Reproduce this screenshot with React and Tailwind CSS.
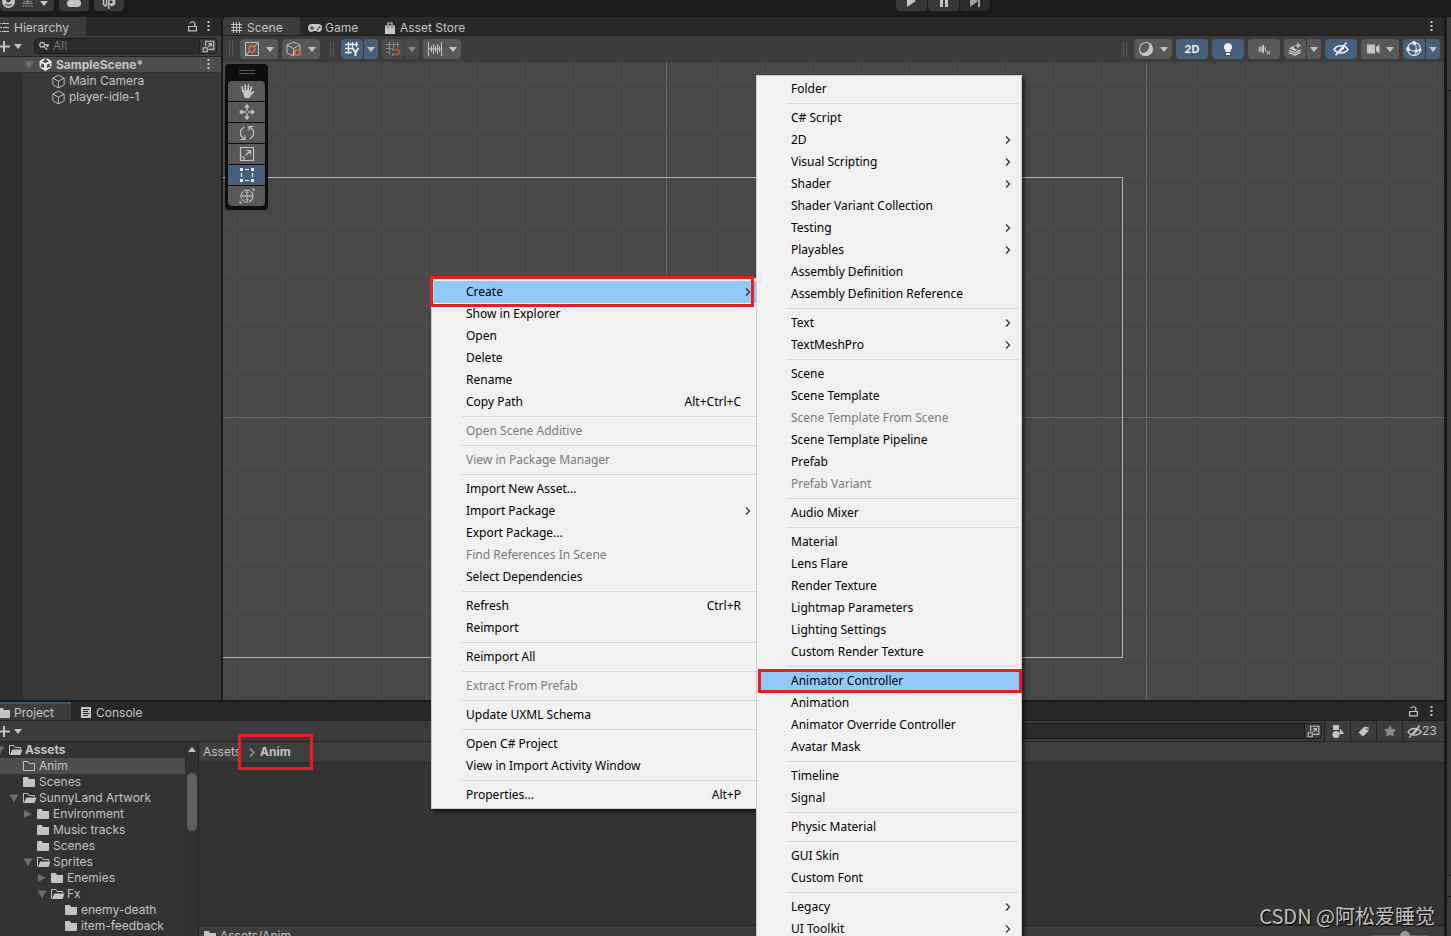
// src/App.jsx
import { FaStar } from "react-icons/fa";

const CREATE_MENU = [
  ["Folder"],
  ["C# Script", "2D>", "Visual Scripting>", "Shader>", "Shader Variant Collection", "Testing>", "Playables>", "Assembly Definition", "Assembly Definition Reference"],
  ["Text>", "TextMeshPro>"],
  ["Scene", "Scene Template", "-Scene Template From Scene", "Scene Template Pipeline", "Prefab", "-Prefab Variant"],
  ["Audio Mixer"],
  ["Material", "Lens Flare", "Render Texture", "Lightmap Parameters", "Lighting Settings", "Custom Render Texture"],
  ["*Animator Controller", "Animation", "Animator Override Controller", "Avatar Mask"],
  ["Timeline", "Signal"],
  ["Physic Material"],
  ["GUI Skin", "Custom Font"],
  ["Legacy>", "UI Toolkit>"],
];

const ASSET_MENU = [
  ["*Create>", "Show in Explorer", "Open", "Delete", "Rename", "Copy Path|Alt+Ctrl+C"],
  ["-Open Scene Additive"],
  ["-View in Package Manager"],
  ["Import New Asset...", "Import Package>", "Export Package...", "-Find References In Scene", "Select Dependencies"],
  ["Refresh|Ctrl+R", "Reimport"],
  ["Reimport All"],
  ["-Extract From Prefab"],
  ["Update UXML Schema"],
  ["Open C# Project", "View in Import Activity Window"],
  ["Properties...|Alt+P"],
];

const FOLDERS = [
  { name: "Assets", level: 0, arrow: "down", icon: "open", bold: true },
  { name: "Anim", level: 1, icon: "empty", selected: true },
  { name: "Scenes", level: 1 },
  { name: "SunnyLand Artwork", level: 1, arrow: "down", icon: "open" },
  { name: "Environment", level: 2, arrow: "right" },
  { name: "Music tracks", level: 2 },
  { name: "Scenes", level: 2 },
  { name: "Sprites", level: 2, arrow: "down", icon: "open" },
  { name: "Enemies", level: 3, arrow: "right" },
  { name: "Fx", level: 3, arrow: "down", icon: "open" },
  { name: "enemy-death", level: 4 },
  { name: "item-feedback", level: 4 },
];

/* ---------- Icons ---------- */

function Icon({ size = 16, className = "", children }) {
  return (
    <svg width={size} height={size} viewBox="0 0 16 16" fill="none" stroke="currentColor" strokeWidth="1.2" className={`shrink-0 ${className}`}>
      {children}
    </svg>
  );
}

function Caret({ className = "" }) {
  return (
    <svg width="8" height="5" viewBox="0 0 8 5" fill="currentColor" className={`shrink-0 ${className}`}>
      <path d="M0 0h8L4 5z" />
    </svg>
  );
}

function TreeArrow({ type }) {
  return (
    <svg width="10" height="8" viewBox="0 0 10 8" fill="#6e6e6e" className="shrink-0">
      {type === "down" && <path d="M0.500 0.500h9L5 8z" />}
      {type === "right" && <path d="M1 0v8l8-4z" />}
    </svg>
  );
}

function Dots() {
  return (
    <svg width="3" height="11" viewBox="0 0 3 11" fill="currentColor">
      <path d="M0.500 0h2v2h-2zM0.500 4h2v2h-2zM0.500 8h2v2h-2z" />
    </svg>
  );
}

function Lock() {
  return (
    <svg width="9" height="11" viewBox="0 0 9 11" fill="none" stroke="currentColor" strokeWidth="1.2">
      <path d="M0.600 5.500h7.800v4.400H0.600zM2.200 2.400C2.200 0.200 6.800 0.200 6.800 2.600v2.900" />
    </svg>
  );
}

function Plus() {
  return (
    <svg width="10" height="11" viewBox="0 0 10 11" fill="currentColor" className="shrink-0">
      <path d="M3 0h2v4.500h5v2H5V11H3V6.500H0v-2h3z" />
    </svg>
  );
}

function Folder({ type = "closed" }) {
  return (
    <svg width="14" height="12" viewBox="0 0 14 12" fill="currentColor" className="shrink-0">
      {type === "closed" && <path d="M0 1.800Q0 1 .8 1h4L6 3h6v7.200q0 .8-.8.8H.8Q0 11 0 10.200z" />}
      {type === "empty" && <path d="M.5 1.500h4.300L6 3.500h5.500v7H.5z" fill="none" stroke="currentColor" />}
      {type === "open" && (
        <>
          <path d="M.5 10.500v-9h4.300L6 3.500h5.500V5" fill="none" stroke="currentColor" />
          <path d="M3.200 5.500H13.500L11.500 11H1z" />
        </>
      )}
    </svg>
  );
}

function Cube() {
  return (
    <Icon size={15}>
      <path d="M8 1.200l6 3.200v7.200l-6 3.200-6-3.200V4.400zM2 4.400l6 3.200 6-3.200M8 7.600v7.200" strokeWidth="1" />
    </Icon>
  );
}

function Hand() {
  return (
    <Icon>
      <path d="M4.200 8.500L2.900 4M6.600 8L6.100 2M9.100 8L9.500 2M11.300 8.500L12.600 4" strokeWidth="1.700" strokeLinecap="round" />
      <path d="M12 11.500l2.500-2.700" strokeWidth="1.700" strokeLinecap="round" />
      <path d="M3.400 7.500h8.800l.6 3.500-2 3.500q-.4.500-1 .5H6.500q-.7 0-1-.5z" fill="currentColor" stroke="none" />
    </Icon>
  );
}

function UnityLogo() {
  return (
    <svg width="13" height="13" viewBox="0 0 24 24" fill="currentColor" className="shrink-0">
      <path d="M13.500 0L23 5.500v11l-3-1.700V9.200l-5.500 3.300v6.300l5-2.800 2.700 1.600L12 24 1.800 17.600 4.500 16l5 2.800v-6.300L4 9.200v5.600l-3 1.700v-11L10.500 0v3.400L5.800 6.300 12 9.900l6.200-3.600-4.700-2.900z" />
    </svg>
  );
}

function EyeOff({ size = 16 }) {
  return (
    <Icon size={size}>
      <path d="M1 8.500C4 3.500 12 3.500 15 8.500C12 13 4 13 1 8.500z" strokeWidth="1.500" />
      <path d="M5 11l6-6.500v3L7.500 11z" fill="currentColor" stroke="none" />
      <path d="M2.500 14.500L13.500 1.500" strokeWidth="1.600" />
    </Icon>
  );
}

function OpenSearch() {
  return (
    <Icon size={13}>
      <path d="M4.500 8V1.500h10v10H8M1.500 9.500h5v5h-5zM7.500 8.500l4-4M8 4.500h3.500V8" strokeWidth="1.400" />
    </Icon>
  );
}

function GridIcon() {
  return (
    <svg width="11" height="11" viewBox="0 0 11 11" stroke="currentColor" strokeWidth="1">
      <path d="M2.500 0v11M5.500 0v11M8.500 0v11M0 2.500h11M0 5.500h11M0 8.500h11" />
    </svg>
  );
}

/* ---------- Shared controls ---------- */

function Grip() {
  return <div className="mr-[3px] ml-1 h-4 w-1 border-x border-[#5a5a5a]" />;
}

function ToolButton({ label, on, wide, caret, dim, children }) {
  const tone = on ? "bg-[#46607c] text-[#eeeeee]" : dim ? "bg-[#4a4a4a] text-[#888888]" : "bg-[#585858] text-[#c4c4c4]";
  return (
    <button
      aria-label={label}
      className={`flex h-5 items-center justify-center rounded-sm ${tone} ${caret ? "w-[38px] gap-[6px]" : wide ? "w-8" : "w-[22px]"}`}
    >
      {children}
      {caret && <Caret />}
    </button>
  );
}

function SplitButton({ label, on, dim, children }) {
  const tone = on ? "bg-[#46607c] text-[#c4c4c4]" : dim ? "bg-[#4a4a4a] text-[#888888]" : "bg-[#585858] text-[#c4c4c4]";
  return (
    <div className="flex gap-px">
      <ToolButton label={label} on={on} dim={dim}>{children}</ToolButton>
      <button aria-label={`${label} options`} className={`flex h-5 w-[14px] items-center justify-center rounded-r-sm ${tone}`}>
        <Caret />
      </button>
    </div>
  );
}

/* Label prefixes: "*" highlighted, "-" disabled. Suffixes: ">" submenu, "|" shortcut */
function ContextMenu({ label, groups, className }) {
  return (
    <div role="menu" aria-label={label} className={`absolute border border-[#cccccc] bg-[#f1f1f1] p-[2px] font-['Noto_Sans',sans-serif] text-xs text-black shadow-[3px_3px_3px_rgba(0,0,0,0.5)] ${className}`}>
      {groups.map((group, i) => (
        <div key={i} role="group">
          {i > 0 && (
            <div className="flex h-[7px] items-center">
              <div className="ml-7 h-px flex-1 bg-[#d5d5d5]" />
            </div>
          )}
          {group.map((entry) => {
            const active = entry.startsWith("*");
            const disabled = entry.startsWith("-");
            const submenu = entry.endsWith(">");
            const [text, shortcut] = entry.replace(/^[*-]/, "").replace(">", "").split("|");
            return (
              <button
                key={entry}
                role="menuitem"
                disabled={disabled}
                className={`flex h-[22px] w-full items-center justify-between pl-8 text-left whitespace-nowrap ${active ? "bg-[#91c9f7]" : ""} ${disabled ? "text-[#7a7a7a]" : ""}`}
              >
                <span>{text}</span>
                {shortcut && <span className="pr-[18px]">{shortcut}</span>}
                {submenu && (
                  <svg width="6" height="8" viewBox="0 0 6 8" fill="none" stroke="#333" strokeWidth="1.300" className="mr-2">
                    <path d="M1 0.500l3.500 3.500L1 7.500" />
                  </svg>
                )}
              </button>
            );
          })}
        </div>
      ))}
    </div>
  );
}

/* ---------- Panels ---------- */

function TopBar() {
  const button = "-mt-[9px] flex h-5 items-center justify-center rounded-b-sm bg-[#383838] text-[#c4c4c4]";
  return (
    <header className="flex h-[17px] shrink-0 items-start overflow-hidden">
      <div className="flex flex-1 gap-[5px]">
        <button className={`${button} w-[54px] gap-[6px] pr-1`}>
          <svg width="13" height="13" viewBox="0 0 13 13" fill="currentColor">
            <path fillRule="evenodd" d="M6.500 0a6.500 6.500 0 100 13 6.500 6.500 0 000-13zM6.500 2.200a2.500 2.500 0 110 5 2.500 2.500 0 010-5zM2.800 8.800c2 1.200 5.400 1.200 7.400 0-.8 3-6.600 3-7.400 0z" />
          </svg>
          <span className="font-['Noto_Sans_CJK_SC',sans-serif] text-xs text-[#999999]">黑</span>
          <Caret className="mt-1" />
        </button>
        <button aria-label="Cloud" className={`${button} w-[30px]`}>
          <svg width="16" height="12" viewBox="0 0 16 12" fill="currentColor">
            <path d="M4 12a3.500 3.500 0 01-.5-6.900A4.500 4.500 0 0112 4.500 3.800 3.800 0 0112 12z" />
          </svg>
        </button>
        <button aria-label="Version control" className={`${button} w-[30px]`}>
          <svg width="14" height="16" viewBox="0 0 14 16" fill="none" stroke="currentColor" strokeWidth="1.500">
            <path d="M4 13.500L1.500 11.500V4L7 1l5.500 3v7L9 13M4.500 6v7M6.800 16V6.800h2.500a2 2 0 010 4.400H7" />
          </svg>
        </button>
      </div>
      <div className="flex gap-px">
        <button aria-label="Play" className={`${button} w-[31px]`}>
          <svg width="9" height="12" viewBox="0 0 9 12" fill="currentColor"><path d="M0 0l9 6-9 6z" /></svg>
        </button>
        <button aria-label="Pause" className={`${button} w-[31px]`}>
          <svg width="8" height="12" viewBox="0 0 8 12" fill="currentColor"><path d="M0 0h3v12H0zM5 0h3v12H5z" /></svg>
        </button>
        <button aria-label="Step" className="-mt-[9px] flex h-5 w-[30px] items-center justify-center rounded-b-sm bg-[#2b2b2b] text-[#a0a0a0]">
          <svg width="10" height="12" viewBox="0 0 10 12" fill="currentColor"><path d="M0 0l8 6-8 6zM8 0h2v12H8z" /></svg>
        </button>
      </div>
      <div className="w-[461px]" />
    </header>
  );
}

function Hierarchy() {
  return (
    <section className="flex w-[221px] shrink-0 flex-col overflow-hidden rounded-tr bg-[#383838]">
      <div className="flex h-[19px] items-stretch bg-[#282828]">
        <h2 className="flex w-[86px] items-center gap-[5px] bg-[#3c3c3c] pt-[2px]">
          <svg width="9" height="9" viewBox="0 0 9 9" fill="currentColor"><path d="M0 0h1v1H0zM2 0h7v1H2zM0 4h2v1H0zM3 4h6v1H3zM0 8h1v1H0zM2 8h7v1H2z" /></svg>
          Hierarchy
        </h2>
        <div className="flex flex-1 items-center justify-end gap-[10px] pr-[11px]">
          <button aria-label="Lock hierarchy"><Lock /></button>
          <button aria-label="Hierarchy menu"><Dots /></button>
        </div>
      </div>
      <div className="flex h-[21px] items-center border-b border-[#232323] bg-[#3c3c3c] pr-1">
        <button aria-label="Add object" className="flex w-[34px] items-center gap-1">
          <Plus />
          <Caret />
        </button>
        <label className="flex h-4 flex-1 items-center rounded-l border border-[#1c1c1c] bg-[#2a2a2a] pl-1">
          <Icon size={10}>
            <circle cx="5" cy="6" r="3.800" strokeWidth="2" />
            <path d="M8 9l5 5M11 6h5l-2.500 3z" strokeWidth="2" />
          </Icon>
          <input aria-label="Search hierarchy" placeholder="All" className="ml-1 w-full bg-transparent text-xs outline-none placeholder:text-[#787878]" />
        </label>
        <button aria-label="Open search" className="flex h-4 w-[17px] items-center justify-center rounded-r border border-l-0 border-[#1c1c1c]"><OpenSearch /></button>
      </div>
      <div className="flex h-4 items-center border-b border-[#303030] bg-[#4d4d4d] pr-[11px] pl-6">
        <TreeArrow type="down" />
        <span className="mr-1 ml-[5px] text-[#eeeeee]"><UnityLogo /></span>
        <span className="flex-1 font-bold">SampleScene*</span>
        <button aria-label="Scene menu"><Dots /></button>
      </div>
      <ul className="flex-1 border-l-[23px] border-[#2f2f2f] pl-7">
        <li className="flex h-4 items-center gap-[3px]"><Cube />Main Camera</li>
        <li className="flex h-4 items-center gap-[3px]"><Cube />player-idle-1</li>
      </ul>
    </section>
  );
}

function SceneToolbar() {
  return (
    <div className="flex h-[26px] shrink-0 items-center gap-1 bg-[#3c3c3c] pr-1 pl-[2px]">
      <Grip />
      <ToolButton label="Pivot mode" caret>
        <Icon>
          <path d="M1.500 1.500h13v13h-13zM2 14L14 2" strokeWidth="1" />
          <circle cx="8" cy="8" r="3" fill="#585858" stroke="#f06a35" strokeWidth="1.500" />
        </Icon>
      </ToolButton>
      <ToolButton label="Pivot rotation" caret>
        <Icon>
          <path d="M7.500 1l6.500 3v5M14 4L7.500 7.500 1 4l6.500-3M1 4v8l6.500 3V7.500" strokeWidth="1" />
          <circle cx="11.500" cy="11.500" r="2.800" fill="#585858" stroke="#f06a35" strokeWidth="1.500" />
        </Icon>
      </ToolButton>
      <div className="pl-[2px]"><Grip /></div>
      <SplitButton label="Grid" on>
        <Icon>
          <path d="M4.500 1v12M8.500 1v6M12.500 1v5M1 3.500h13M1 7.500h8M1 11.500h7" strokeWidth="1.300" />
          <path d="M8.500 7l3 4.500 3-4.500M11.500 11v4" strokeWidth="2" />
        </Icon>
      </SplitButton>
      <SplitButton label="Snapping" dim>
        <Icon>
          <path d="M4.500 1v13M8.500 1v6M12.500 1v5M1 3.500h13M1 7.500h6M1 11.500h4" strokeWidth="1" />
          <path d="M9.500 8.500h2.500a2.500 2.500 0 010 5H9.500" stroke="#b0573a" strokeWidth="2" />
          <path d="M7 7.500h2v2H7zM7 12.500h2v2H7z" fill="currentColor" stroke="none" />
        </Icon>
      </SplitButton>
      <ToolButton label="Snap increment" caret>
        <Icon>
          <path d="M1.500 1v14M14.500 1v14M4.500 5v6M6.500 3v10M8.500 5v6M10.500 3v10M12.500 5v6M1 8h14" strokeWidth="1" />
        </Icon>
      </ToolButton>
      <div className="flex-1" />
      <Grip />
      <ToolButton label="Draw mode" caret>
        <Icon>
          <circle cx="8" cy="8" r="6.500" />
          <path d="M12 3a6.500 6.500 0 01-9 9.500C8 13.500 12.500 9 12 3z" fill="currentColor" />
        </Icon>
      </ToolButton>
      <ToolButton label="2D view" on wide><span className="text-[11px] font-bold">2D</span></ToolButton>
      <ToolButton label="Lighting" on wide>
        <Icon><path d="M8 2a4 4 0 00-2.500 7.200V11h5V9.200A4 4 0 008 2zM6 12h4v2H6z" fill="currentColor" stroke="none" /></Icon>
      </ToolButton>
      <ToolButton label="Audio" wide>
        <Icon size={14}>
          <path d="M2 5h2v6H2zM5 5l3-2.500v11L5 11z" fill="currentColor" stroke="none" />
          <path d="M10 5.500c-1 1.500-1 3.500 0 5M11 10l4 4M15 10l-4 4" />
        </Icon>
      </ToolButton>
      <SplitButton label="Effects">
        <Icon size={14}>
          <path d="M1 7l6-3v3l4 2-3 1.500z" fill="currentColor" stroke="none" />
          <path d="M11.500 0l1.200 2.800L15.500 4l-2.800 1.200L11.500 8l-1.200-2.800L7.500 4l2.800-1.200z" fill="currentColor" stroke="none" />
          <path d="M1 9.500L8 12.500 14.500 9M1 12l7 3 6.500-3.500" strokeWidth="1.600" />
        </Icon>
      </SplitButton>
      <ToolButton label="Hidden objects" on wide><EyeOff /></ToolButton>
      <ToolButton label="Scene camera" caret>
        <svg width="13" height="10" viewBox="0 0 13 10" fill="currentColor"><path d="M0 0.500h8v9H0zM9 3l3.500-2.500v9L9 7z" /></svg>
      </ToolButton>
      <SplitButton label="Gizmos" on>
        <Icon>
          <circle cx="8" cy="8" r="6.500" />
          <path d="M1.500 8c3 2.500 10 2.500 13 0M8 1.500c3 3 3 10 0 13" strokeWidth="1" />
          <g fill="currentColor" stroke="none"><circle cx="8" cy="2" r="2" /><circle cx="2" cy="8" r="2" /><circle cx="10.300" cy="10" r="1.800" /><circle cx="14" cy="9" r="1.500" /></g>
        </Icon>
      </SplitButton>
    </div>
  );
}

const TOOLS = [
  { label: "View", icon: <Hand /> },
  { label: "Move", icon: <Icon><path d="M8 3v4M8 9v4M3 8h4M9 8h4" strokeWidth="1.300" /><path d="M8 0l3 3.500H5zM8 16l3-3.500H5zM0 8l3.500-3v6zM16 8l-3.500-3v6z" fill="currentColor" stroke="none" /></Icon> },
  { label: "Rotate", icon: <Icon><path d="M5.500 14C0 11 0 5 5.500 2M10.500 2C16 5 16 11 10.500 14M1.500 14.500h4.500V10.500M14.500 1.500H10v4" /></Icon> },
  { label: "Scale", icon: <Icon><path d="M1.500 1.500h13v13h-13zM1.500 11h3.500v3.500M6.500 9.500l5-5M7.500 4.500h4v4" /></Icon> },
  { label: "Rect", icon: <Icon><path d="M6 2.500h4M6 13.500h4M2.500 6v4M13.500 6v4" /><path d="M1 1h3v3H1zM12 1h3v3h-3zM1 12h3v3H1zM12 12h3v3h-3z" fill="currentColor" stroke="none" /></Icon>, on: true },
  { label: "Transform", icon: <Icon><circle cx="8" cy="8" r="6" strokeDasharray="7 1" /><path d="M8 3.500v9M3.500 8h9M6.500 5L8 3.500 9.500 5M6.500 11L8 12.500 9.500 11M5 6.500L3.500 8 5 9.500M11 6.500L12.500 8 11 9.500" strokeWidth="1" /><path d="M12.500 .5h3v3zM.5 12.500v3h3z" fill="currentColor" stroke="none" /></Icon> },
];

function Scene() {
  const columns = Array.from({ length: 60 }, (_, i) => 11 + i * 48);
  const rows = Array.from({ length: 40 }, (_, i) => 19 + i * 48);
  return (
    <section className="flex min-w-0 flex-1 flex-col overflow-hidden rounded-t bg-[#282828]">
      <div className="flex h-[19px] shrink-0 border-b border-[#1f1f1f] pr-[11px]">
        <button className="flex w-[77px] items-center gap-[5px] rounded-t bg-[#3c3c3c] pt-[3px] pl-2"><GridIcon />Scene</button>
        <button className="flex w-[77px] items-center gap-[3px] pt-[3px] pl-2">
          <svg width="14" height="8" viewBox="0 0 14 8" fill="currentColor">
            <path fillRule="evenodd" d="M4 0h6a4 4 0 010 8L8.500 7h-3L4 8a4 4 0 010-8zM3.500 2v1.500H2v1h1.500V6h1V4.500H6v-1H4.500V2zM9 4.500v1.500h1.500V4.500zM10.800 2.500v1.500h1.500V2.500z" />
          </svg>
          Game
        </button>
        <button className="flex flex-1 items-center gap-[5px] pt-[3px] pl-2">
          <svg width="10" height="12" viewBox="0 0 10 12"><path d="M0 3.500h10V12H0z" fill="currentColor" /><path d="M3 4V1h4v3" fill="none" stroke="currentColor" strokeWidth="1.200" /><path d="M3 4.500v1.500M7 4.500v1.500" stroke="#282828" /></svg>
          Asset Store
        </button>
        <button aria-label="Scene panel menu"><Dots /></button>
      </div>
      <SceneToolbar />
      <div className="relative min-h-0 flex-1 overflow-hidden bg-[#474747]">
        <svg width="100%" height="100%" className="block" shapeRendering="crispEdges">
          {columns.map((x, i) => (
            <rect key={x} x={x} y="0" width="1" height="100%" fill={i % 10 === 9 ? "#686868" : "#4f4f4f"} />
          ))}
          {rows.map((y, i) => (
            <rect key={y} x="0" y={y} width="100%" height="1" fill={i % 10 === 7 ? "#686868" : "#4f4f4f"} />
          ))}
          <path d="M0 115.500H899.500V595.500H0" fill="none" stroke="#b4b4b4" />
        </svg>
        <div className="absolute top-[2px] left-[2px] flex w-[43px] flex-col items-center gap-px rounded-sm bg-[#0d0d0d] pb-1">
          <div className="mt-[6px] mb-[6px] h-1 w-4 border-y border-[#5a5a5a]" />
          {TOOLS.map((tool) => (
            <button key={tool.label} aria-label={tool.label} className={`flex h-5 w-[37px] items-center justify-center first-of-type:rounded-t last-of-type:rounded-b ${tool.on ? "bg-[#46607c] text-[#eeeeee]" : "bg-[#585858] text-[#c4c4c4]"}`}>
              {tool.icon}
            </button>
          ))}
        </div>
      </div>
    </section>
  );
}

function FolderTree() {
  return (
    <div className="flex w-[198px] shrink-0 overflow-hidden">
      <ul className="min-w-0 flex-1">
        {FOLDERS.map((folder, i) => (
          <li key={i} className={`h-4 ${folder.selected ? "bg-[#4d4d4d]" : ""}`}>
            <div className="-ml-[5px] flex h-4 items-center whitespace-nowrap" style={{ paddingLeft: folder.level * 14 }}>
              <TreeArrow type={folder.arrow} />
              <span className="mr-[2px] ml-1"><Folder type={folder.icon} /></span>
              <span className={folder.bold ? "font-bold" : ""}>{folder.name}</span>
            </div>
          </li>
        ))}
      </ul>
      <div className="flex w-[13px] flex-col items-center border-l border-[#2c2c2c] bg-[#323232] pt-[5px]">
        <Caret className="rotate-180" />
        <div className="mt-[21px] h-[58px] w-[10px] rounded-full bg-[#5f5f5f]" />
      </div>
    </div>
  );
}

function Project() {
  const filter = "flex h-5 w-[26px] items-center justify-center border-l border-[#232323]";
  return (
    <section className="flex h-[234px] min-w-0 shrink-0 flex-col overflow-hidden bg-[#333333]">
      <div className="flex h-[19px] shrink-0 border-b border-[#1f1f1f] bg-[#282828]">
        <button className="flex w-[71px] items-center border-t-2 border-[#2c5d87] bg-[#3c3c3c] pt-px">
          <span className="-ml-[2px] mr-[2px]"><Folder /></span>Project
        </button>
        <button className="flex items-center gap-[5px] pt-[3px] pl-[10px]">
          <svg width="10" height="11" viewBox="0 0 10 11"><path d="M0 0h10v11H0z" fill="currentColor" /><path d="M2 2.500h6M2 4.500h5M2 6.500h6M2 8.500h5" stroke="#282828" /></svg>
          Console
        </button>
        <div className="flex flex-1 items-center justify-end gap-3 pr-[11px]">
          <button aria-label="Lock project"><Lock /></button>
          <button aria-label="Project menu"><Dots /></button>
        </div>
      </div>
      <div className="flex h-[21px] shrink-0 items-center border-b border-[#232323] bg-[#3c3c3c]">
        <button aria-label="Add asset" className="flex flex-1 items-center gap-1">
          <Plus />
          <Caret />
        </button>
        <input aria-label="Search assets" className="h-4 w-[400px] rounded-l border border-[#1c1c1c] bg-[#2a2a2a] px-2 outline-none" />
        <button aria-label="Open asset search" className="mr-[2px] flex h-4 w-[17px] items-center justify-center rounded-r border border-l-0 border-[#1c1c1c]"><OpenSearch /></button>
        <button aria-label="Filter by type" className={filter}>
          <svg width="12" height="13" viewBox="0 0 12 13" fill="currentColor"><path d="M1 0h6v5H1zM8.500 3.500L12 9H7z" /><circle cx="4" cy="9.500" r="3.500" /></svg>
        </button>
        <button aria-label="Filter by label" className={filter}>
          <svg width="11" height="11" viewBox="0 0 11 11" fill="currentColor"><path fillRule="evenodd" d="M6 1h4.500v4L5 10.500 .5 6.500zM8 2.500v1.500h1.500V2.500z" /></svg>
        </button>
        <button aria-label="Favorites" className={`${filter} text-[#888888]`}><FaStar size={12} /></button>
        <button aria-label="Hidden packages" className="flex h-5 w-[42px] items-center border-l border-[#232323] pl-1">
          <EyeOff size={15} /><span>23</span>
        </button>
      </div>
      <div className="flex min-h-0 flex-1">
        <FolderTree />
        <div className="flex min-w-0 flex-1 flex-col border-l border-[#232323]">
          <nav className="flex h-[21px] shrink-0 items-center border-b border-[#292929] bg-[#3e3e3e] pl-1">
            <a href="#assets">Assets</a>
            <svg width="6" height="9" viewBox="0 0 6 9" fill="none" stroke="#999" strokeWidth="1.500" className="mr-[5px] ml-2"><path d="M1 0.500l4 4-4 4" /></svg>
            <a href="#anim" className="font-bold">Anim</a>
          </nav>
          <div className="flex-1" />
          <footer className="flex h-[11px] shrink-0 items-start overflow-hidden border-t border-[#232323] bg-[#3c3c3c] pr-4 pl-[5px]">
            <span className="mt-[2px] flex flex-1 items-center gap-[2px] leading-4"><Folder />Assets/Anim</span>
            <div className="mt-1 flex h-[11px] w-[55px] items-center justify-center">
              <input type="range" aria-label="Icon size" className="h-px w-full appearance-none bg-[#5e5e5e] [&::-webkit-slider-thumb]:h-[10px] [&::-webkit-slider-thumb]:w-[10px] [&::-webkit-slider-thumb]:appearance-none [&::-webkit-slider-thumb]:rounded-full [&::-webkit-slider-thumb]:bg-[#999999]" defaultValue="60" />
            </div>
          </footer>
        </div>
      </div>
    </section>
  );
}

export default function App() {
  return (
    <div className="relative flex h-screen flex-col overflow-hidden bg-[#191919] font-['Inter',sans-serif] text-xs leading-4 text-[#c4c4c4]">
      <TopBar />
      <div className="flex min-h-0 flex-1 gap-[3px]">
        <main className="flex min-w-0 flex-1 flex-col gap-[2px]">
          <div className="flex min-h-0 flex-1 gap-[2px]">
            <Hierarchy />
            <Scene />
          </div>
          <Project />
        </main>
        <aside className="flex w-1 shrink-0 flex-col rounded-tl bg-[#383838]">
          <div className="h-[74px] border-b border-[#191919] bg-[#3c3c3c]" />
          <div className="flex-1" />
          <div className="h-[22px] border-y border-[#191919] bg-[#3c3c3c]" />
          <div className="h-[39px] bg-[#3c3c3c]" />
        </aside>
      </div>

      {/* Context menus */}
      <ContextMenu label="Assets" groups={ASSET_MENU} className="top-[278px] left-[431px] w-[331px]" />
      <ContextMenu label="Create" groups={CREATE_MENU} className="top-[75px] left-[756px] w-[266px]" />

      {/* Highlight boxes */}
      <div className="pointer-events-none absolute top-[276px] left-[430px] h-[31px] w-[324px] border-3 border-[#ed1c24]" />
      <div className="pointer-events-none absolute top-[669px] left-[758px] h-6 w-[264px] border-3 border-[#ed1c24]" />
      <div className="pointer-events-none absolute top-[734px] left-[238px] h-9 w-[75px] border-3 border-[#ed1c24]" />

      <p className="pointer-events-none absolute right-4 bottom-2 font-['Noto_Sans_CJK_SC',sans-serif] text-xl leading-6 text-[#c0c0c0] [text-shadow:1px_1px_1px_#000]">
        CSDN @阿松爱睡觉
      </p>
    </div>
  );
}
